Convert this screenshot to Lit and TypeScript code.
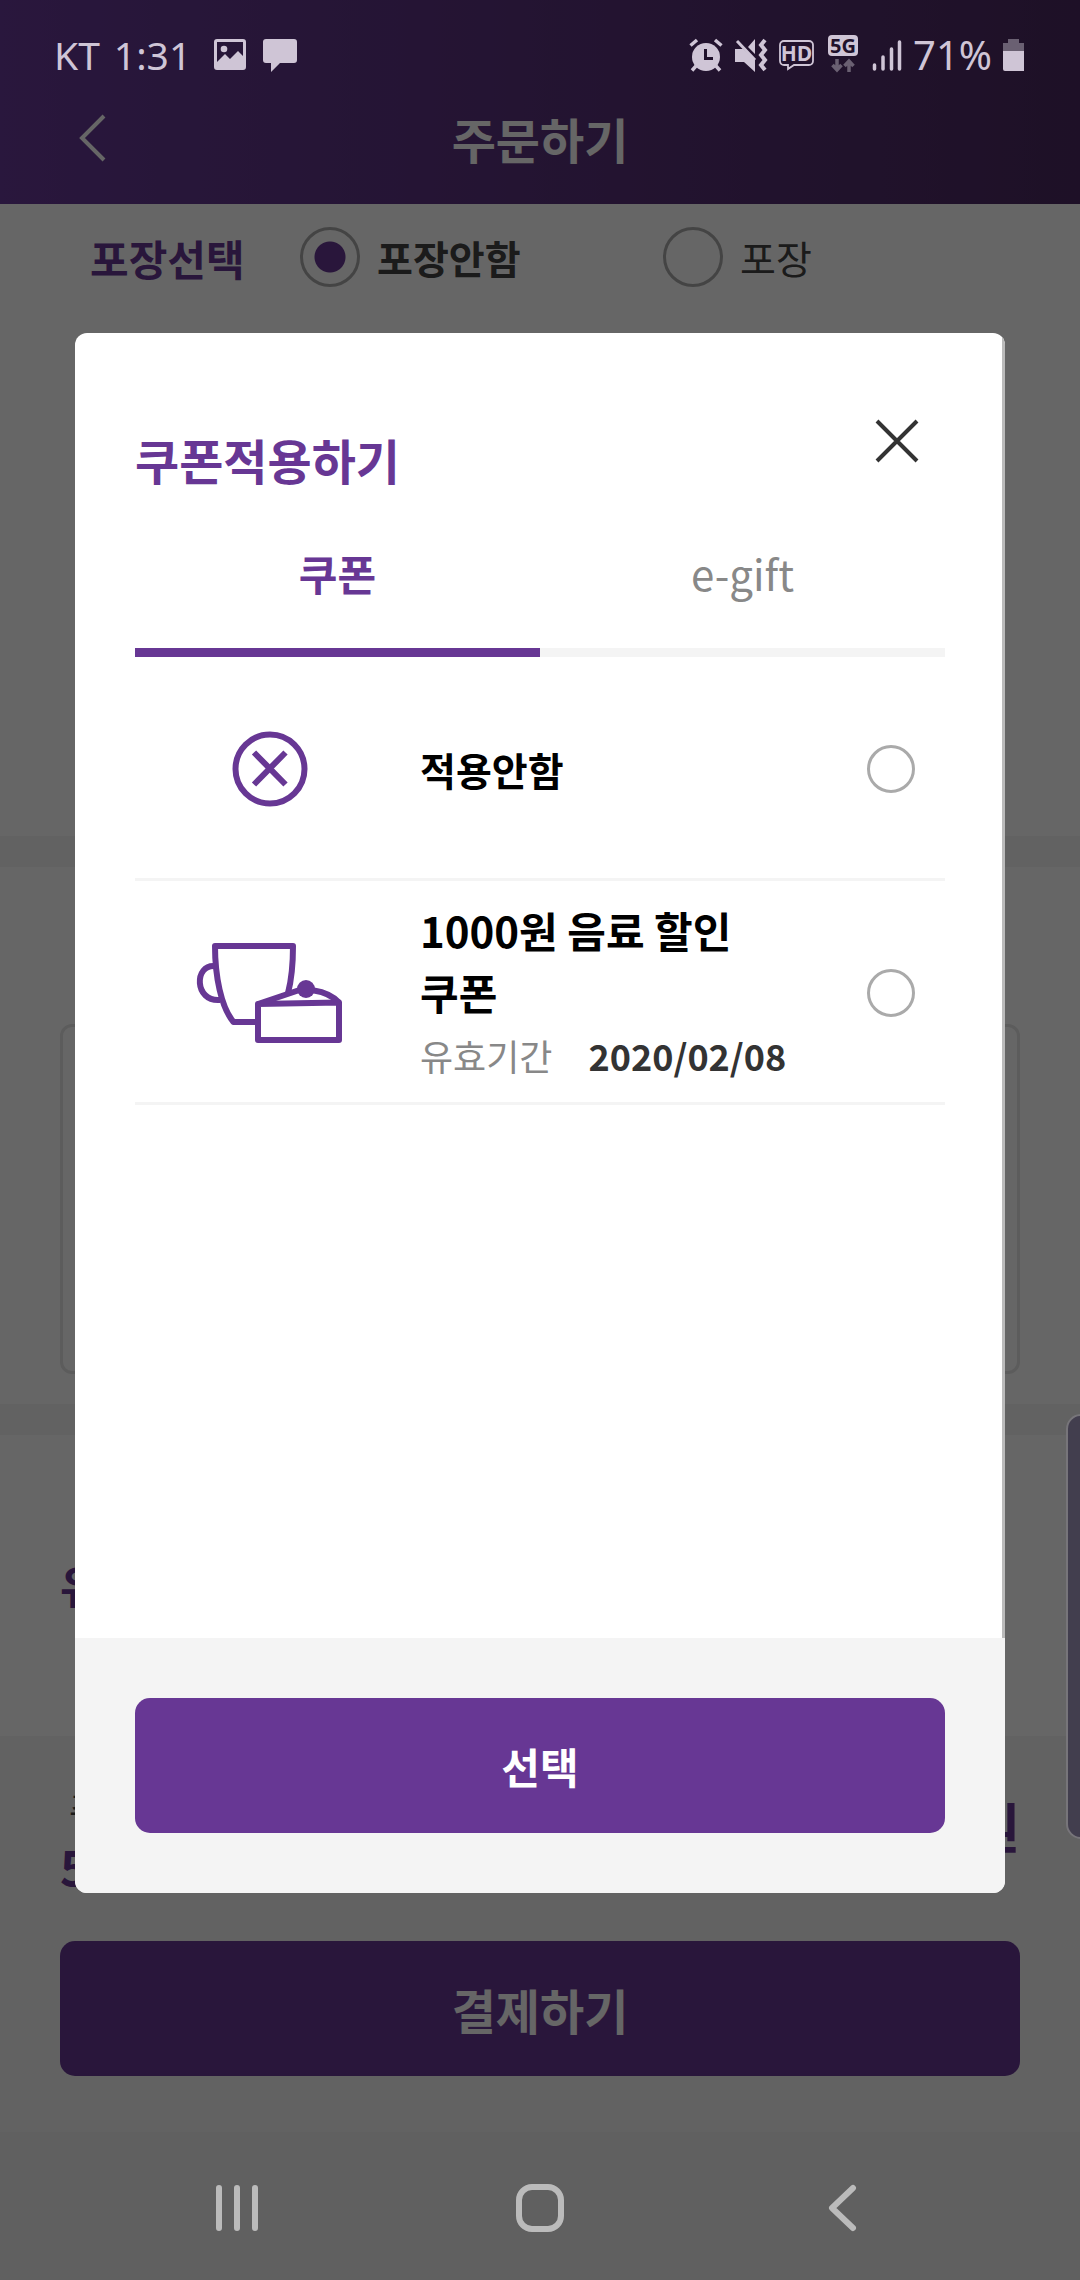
import { LitElement, html, css, svg } from "lit";
import { customElement, state } from "lit/decorators.js";

interface Coupon {
  id: string;
  title: string;
  icon: "none" | "cafe";
  expires?: string;
}

const COUPONS: Coupon[] = [
  { id: "none", title: "적용안함", icon: "none" },
  { id: "drink", title: "1000원 음료 할인 쿠폰", icon: "cafe", expires: "2020/02/08" },
];

const radioStyles = css`
  input[type="radio"] {
    appearance: none;
    box-sizing: border-box;
    flex: none;
    margin: 0;
    border: 3px solid #aaa;
    border-radius: 50%;
    background: transparent;
  }
`;

const resetStyles = css`
  * {
    box-sizing: border-box;
  }
  button {
    border: 0;
    padding: 0;
    margin: 0;
    background: none;
    font: inherit;
    color: inherit;
  }
  h1,
  h2,
  p {
    margin: 0;
  }
  svg {
    display: block;
  }
`;

@customElement("status-bar")
export class StatusBar extends LitElement {
  static styles = css`
    :host {
      display: flex;
      justify-content: space-between;
      align-items: center;
      height: 110px;
      padding: 0 56px 0 54px;
      color: #cfc5d6;
      font-family: "Noto Sans", "Noto Sans CJK KR", sans-serif;
      font-size: 40px;
      font-weight: 400;
      line-height: 48px;
    }
    .group {
      display: flex;
      align-items: center;
    }
    .left {
      gap: 14px;
      font-size: 39px;
    }
    .right {
      gap: 11px;
    }
    .clock {
      margin-right: 9px;
    }
    svg {
      display: block;
    }
  `;

  render() {
    return html`
      <div class="group left">
        <span>KT</span>
        <span class="clock">1:31</span>
        <svg width="32" height="36" viewBox="0 0 32 36" fill="currentColor">
          <path fill-rule="evenodd" d="M3 2h26a3 3 0 0 1 3 3v25a3 3 0 0 1-3 3H3a3 3 0 0 1-3-3V5a3 3 0 0 1 3-3zM3 5v20l8-8 5 5 8-8 5 5V5z" />
          <circle cx="10" cy="12" r="3.3" />
        </svg>
        <svg width="40" height="36" viewBox="0 0 40 36" fill="currentColor">
          <path d="M6 2h28a3 3 0 0 1 3 3v18a3 3 0 0 1-3 3H20l-9 9v-9H6a3 3 0 0 1-3-3V5a3 3 0 0 1 3-3z" />
        </svg>
      </div>
      <div class="group right">
        <svg width="34" height="36" viewBox="0 0 34 36" fill="none" stroke="currentColor">
          <circle cx="17" cy="20" r="14" fill="currentColor" stroke="none" />
          <path d="M1.500 8.500 8 3M32.500 8.500 26 3M7 29l-4 4.500M27 29l4 4.500" stroke-width="3.500" />
          <path d="M16.500 12v9.500H24" stroke="#20112b" stroke-width="3" />
        </svg>
        <svg width="34" height="36" viewBox="0 0 34 36" fill="currentColor">
          <path d="M1 12h8l12 11v12L10 25H1zM14 10l7-8v15z" />
          <path d="M3 4l18 19" fill="none" stroke="currentColor" stroke-width="3" />
          <path d="M31 3l-4 5 4 5-4 5 4 5-4 5 4 5" fill="none" stroke="currentColor" stroke-width="4" />
        </svg>
        <svg width="35" height="36" viewBox="0 0 35 36">
          <path d="M5 4h25a4 4 0 0 1 4 4v16a4 4 0 0 1-4 4H15l-6 4v-4H5a4 4 0 0 1-4-4V8a4 4 0 0 1 4-4z" fill="none" stroke="currentColor" stroke-width="1.800" />
          <text x="17.500" y="24" text-anchor="middle" font-family="Open Sans, sans-serif" font-size="21" font-weight="700" fill="currentColor">HD</text>
        </svg>
        <svg width="36" height="56" viewBox="0 -8 36 56">
          <rect x="3" y="0" width="30" height="21" rx="4" fill="currentColor" />
          <text x="18" y="17.500" text-anchor="middle" font-family="Open Sans, sans-serif" font-size="20" font-weight="700" fill="#20112b">5G</text>
          <path d="M12 24v10M7.500 30l4.500 5 4.500-5M24 37V27M19.500 31l4.500-5 4.500 5" fill="none" stroke="#6a6072" stroke-width="3.500" />
        </svg>
        <svg width="30" height="36" viewBox="0 0 30 36" stroke="currentColor" stroke-width="3.500" stroke-linecap="round">
          <path d="M2.500 28v4M11 20v12M19.500 12V32M27.500 5v27" />
        </svg>
        <span>71%</span>
        <svg width="21" height="36" viewBox="0 0 21 36">
          <path d="M5 2h11v4h5v9H0V6h5z" fill="#6a6072" />
          <path d="M0 14h21v20H2a2 2 0 0 1-2-2z" fill="currentColor" />
        </svg>
      </div>
    `;
  }
}

@customElement("order-page")
export class OrderPage extends LitElement {
  static styles = [
    resetStyles,
    radioStyles,
    css`
      :host {
        display: flex;
        flex-direction: column;
        min-height: 100vh;
        background: #fff;
        color: #444;
      }
      .header {
        display: grid;
        grid-template-columns: 66px 1fr 66px;
        align-items: center;
        padding: 108px 60px 36px;
        background: linear-gradient(90deg, #673a98, #4c2a61);
        color: #fff;
      }
      .header h1 {
        font-size: 48px;
        line-height: 60px;
        text-align: center;
      }
      .back {
        display: grid;
        place-items: center;
        height: 60px;
      }
      .packing {
        display: flex;
        align-items: flex-start;
        height: 632px;
        padding: 22px 90px;
      }
      .packing-title,
      .option {
        display: flex;
        flex: none;
        align-items: center;
        height: 62px;
        font-size: 39px;
        white-space: nowrap;
      }
      .packing-title {
        width: 210px;
        color: #673794;
        font-size: 42px;
        font-weight: 700;
      }
      .option {
        width: 363px;
        gap: 17px;
      }
      .option input {
        width: 60px;
        height: 60px;
      }
      .option input:checked {
        background: radial-gradient(circle, #673794 15px, transparent 16px);
      }
      .option.chosen {
        font-weight: 700;
      }
      .strip {
        height: 31px;
        background: #f5f5f5;
      }
      .card-area {
        display: flex;
        height: 537px;
        padding: 157px 60px 30px;
      }
      .card {
        flex: 1;
        border: 3px solid #e6e6e6;
        border-radius: 12px;
      }
      .notice {
        height: 301px;
        padding: 120px 60px;
        color: #673794;
        font-size: 45px;
        font-weight: 700;
        line-height: 60px;
      }
      .summary {
        flex: 1;
        display: flex;
        flex-direction: column;
        gap: 46px;
        padding: 45px 60px 204px;
        background: #f4f4f4;
      }
      .totals {
        display: flex;
        justify-content: space-between;
        align-items: flex-start;
        color: #673794;
        font-size: 48px;
        font-weight: 700;
        line-height: 60px;
      }
      .count-label {
        padding-left: 9px;
        color: #444;
        font-size: 36px;
        font-weight: 400;
        line-height: 54px;
      }
      .grand {
        padding-top: 15px;
        font-size: 54px;
      }
      .pay {
        flex: none;
        height: 135px;
        border-radius: 15px;
        background: #673794;
        color: #fff;
        font-size: 48px;
        font-weight: 700;
      }
    `,
  ];

  render() {
    return html`
      <header class="header">
        <button class="back" aria-label="뒤로">
          <svg width="30" height="48" viewBox="0 0 30 48" fill="none" stroke="currentColor" stroke-width="4">
            <path d="M26 2 4 24l22 22" />
          </svg>
        </button>
        <h1>주문하기</h1>
      </header>
      <section class="packing">
        <span class="packing-title">포장선택</span>
        <label class="option chosen"><input type="radio" name="packing" checked />포장안함</label>
        <label class="option"><input type="radio" name="packing" />포장</label>
      </section>
      <div class="strip"></div>
      <section class="card-area"><div class="card"></div></section>
      <div class="strip"></div>
      <section class="notice">유</section>
      <section class="summary">
        <div class="totals">
          <div>
            <p class="count-label">주</p>
            <p>5</p>
          </div>
          <p class="grand">원</p>
        </div>
        <button class="pay">결제하기</button>
      </section>
    `;
  }
}

@customElement("coupon-row")
export class CouponRow extends LitElement {
  static properties = { coupon: { attribute: false } };
  declare coupon: Coupon;

  static styles = [
    resetStyles,
    radioStyles,
    css`
      :host {
        display: block;
        border-bottom: 3px solid #f4f4f4;
      }
      .row {
        display: grid;
        grid-template-columns: 1fr 432px 108px;
        align-items: center;
        min-height: 221px;
        padding-top: 2px;
      }
      .icon {
        justify-self: center;
      }
      .info {
        padding: 0 27px 0 15px;
        color: #000;
        word-break: keep-all;
      }
      .title {
        font-size: 39px;
        font-weight: 700;
        line-height: 62px;
      }
      .title.named {
        font-size: 42px;
      }
      .meta {
        display: flex;
        gap: 36px;
        color: #888;
        font-size: 36px;
        line-height: 64px;
      }
      .date {
        color: #333;
        font-weight: 700;
      }
      .pick {
        justify-self: center;
        width: 48px;
        height: 48px;
      }
      .pick:checked {
        background: radial-gradient(circle, #673794 12px, transparent 13px);
      }
    `,
  ];

  private icon() {
    return this.coupon.icon === "none"
      ? html`<svg class="icon" width="76" height="76" viewBox="0 0 76 76" fill="none" stroke="#673794" stroke-width="6">
          ${svg`<circle cx="38" cy="38" r="34.500" /><path d="M22 21.500l31.500 32M53.500 21.500l-31.500 32" />`}
        </svg>`
      : html`<svg class="icon" width="148" height="100" viewBox="0 0 148 100" fill="none" stroke="#673794" stroke-width="6" stroke-linejoin="round">
          ${svg`
            <path d="M62 79H37.500C25 64 19 33 19 3h78c0 20-1 32-5 47" />
            <path d="M19 23C-2 21-2 59 24 57" />
            <path d="M62 61 143 59.500V97H62z" />
            <path d="M62 61 102 47.500H118Q134 50 143 59.500" />
            <circle cx="110" cy="46" r="9" fill="#673794" stroke="none" />
          `}
        </svg>`;
  }

  render() {
    const c = this.coupon;
    return html`
      <label class="row">
        ${this.icon()}
        <span class="info">
          <p class="title ${c.expires ? "named" : ""}">${c.title}</p>
          ${c.expires
            ? html`<p class="meta"><span>유효기간</span><span class="date">${c.expires}</span></p>`
            : null}
        </span>
        <input class="pick" type="radio" name="coupon" value=${c.id} />
      </label>
    `;
  }
}

@customElement("coupon-dialog")
export class CouponDialog extends LitElement {
  @state() private tab = "coupon";

  static styles = [
    resetStyles,
    css`
      :host {
        display: block;
        overflow: hidden;
        border-radius: 12px;
        background: #fff;
      }
      .body {
        min-height: 1305px;
        padding: 60px 57px 60px 60px;
        border-right: 3px solid #bbb;
      }
      .head {
        display: flex;
        justify-content: space-between;
      }
      .head h2 {
        padding-top: 36px;
        color: #673794;
        font-size: 48px;
        line-height: 60px;
      }
      .close {
        display: grid;
        place-items: center;
        width: 96px;
        height: 96px;
      }
      .tabs {
        display: grid;
        grid-template-columns: 1fr 1fr;
      }
      .tab {
        height: 168px;
        padding-top: 8px;
        border-bottom: 9px solid #f4f4f4;
        color: #888;
        font-size: 42px;
      }
      .tab.active {
        border-color: #673794;
        color: #673794;
        font-weight: 700;
      }
      .foot {
        display: flex;
        padding: 60px;
        background: #f4f4f4;
      }
      .select {
        flex: 1;
        height: 135px;
        border-radius: 15px;
        background: #673794;
        color: #fff;
        font-size: 42px;
        font-weight: 700;
      }
    `,
  ];

  private tabButton(id: string, label: string) {
    return html`<button
      class="tab ${this.tab === id ? "active" : ""}"
      role="tab"
      aria-selected=${this.tab === id}
      @click=${() => (this.tab = id)}
    >${label}</button>`;
  }

  render() {
    return html`
      <div class="body">
        <div class="head">
          <h2>쿠폰적용하기</h2>
          <button class="close" aria-label="닫기">
            <svg width="44" height="44" viewBox="0 0 44 44" stroke="#333" stroke-width="4">
              <path d="M2 2l40 40M42 2 2 42" />
            </svg>
          </button>
        </div>
        <div class="tabs" role="tablist">
          ${this.tabButton("coupon", "쿠폰")}${this.tabButton("gift", "e-gift")}
        </div>
        ${this.tab === "coupon" ? COUPONS.map((c) => html`<coupon-row .coupon=${c}></coupon-row>`) : null}
      </div>
      <div class="foot"><button class="select">선택</button></div>
    `;
  }
}

@customElement("nav-bar")
export class NavBar extends LitElement {
  static styles = [
    resetStyles,
    css`
      :host {
        display: grid;
        grid-template-columns: repeat(3, 1fr);
        height: 144px;
        padding: 4px 86px 0;
        background: #606060;
        color: #bbb;
      }
      button {
        display: grid;
        place-items: center;
      }
    `,
  ];

  render() {
    return html`
      <button aria-label="최근 앱">
        <svg width="48" height="48" viewBox="0 0 48 48" stroke="currentColor" stroke-width="6" stroke-linecap="round">
          <path d="M6 4v40M24 4v40M42 4v40" />
        </svg>
      </button>
      <button aria-label="홈">
        <svg width="48" height="48" viewBox="0 0 48 48" fill="none" stroke="currentColor" stroke-width="6">
          <rect x="3" y="3" width="42" height="42" rx="13" />
        </svg>
      </button>
      <button aria-label="뒤로">
        <svg width="48" height="48" viewBox="0 0 48 48" fill="none" stroke="currentColor" stroke-width="6" stroke-linecap="round" stroke-linejoin="round">
          <path d="M34 4 13 24l21 20" />
        </svg>
      </button>
    `;
  }
}

@customElement("app-root")
export class AppRoot extends LitElement {
  static styles = css`
    :host {
      display: grid;
      grid-template-columns: minmax(0, 1fr);
      min-height: 100vh;
      position: relative;
      overflow: hidden;
      font-family: "Noto Sans CJK KR", sans-serif;
    }
    .page,
    .scrim {
      grid-area: 1 / 1;
    }
    .scrim {
      position: relative;
      display: flex;
      flex-direction: column;
      background: rgba(0, 0, 0, 0.6);
    }
    .dialog {
      flex: none;
      margin: 223px 75px auto;
    }
    .edge-panel {
      position: absolute;
      top: 1414px;
      right: -16px;
      width: 30px;
      height: 425px;
      box-sizing: border-box;
      border: 2px solid #77757a;
      border-radius: 15px;
      background: #423e4e;
    }
  `;

  render() {
    return html`
      <order-page class="page"></order-page>
      <div class="scrim">
        <status-bar></status-bar>
        <coupon-dialog class="dialog" role="dialog" aria-label="쿠폰적용하기"></coupon-dialog>
        <nav-bar></nav-bar>
        <div class="edge-panel"></div>
      </div>
    `;
  }
}
